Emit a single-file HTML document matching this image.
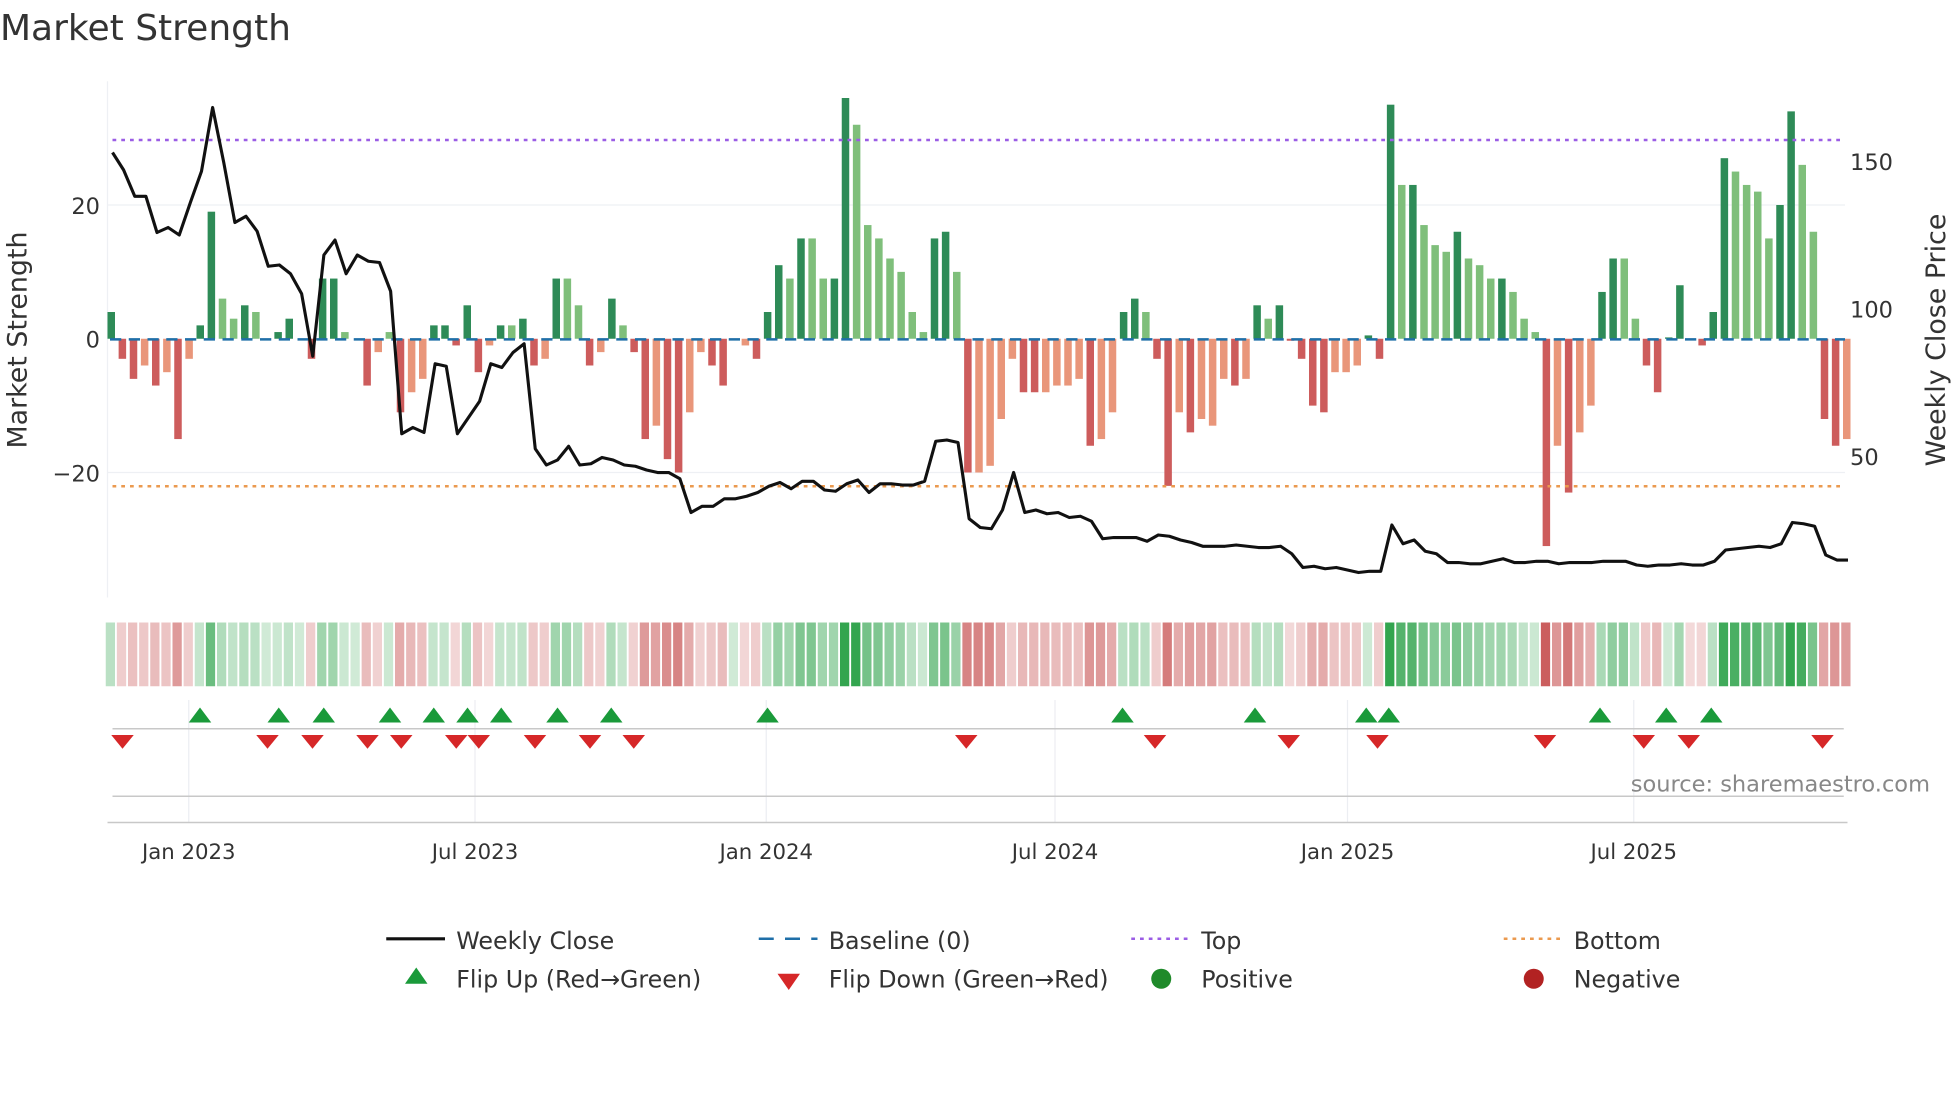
<!DOCTYPE html>
<html><head><meta charset="utf-8"><style>
html,body{margin:0;padding:0;background:#fff;width:1960px;height:1102px;overflow:hidden}
svg{display:block;font-family:"DejaVu Sans","Liberation Sans",sans-serif}
</style></head><body>
<svg id="s" width="1960" height="1102" viewBox="0 0 1568 881.6" xmlns="http://www.w3.org/2000/svg">
<rect width="1568" height="882" fill="#fff"/>
<text x="0" y="32" font-size="28.8" fill="#333">Market Strength</text>
<g stroke="#eef0f4" stroke-width="1">
<line x1="86" y1="164" x2="1476" y2="164"/><line x1="86" y1="378" x2="1476" y2="378"/>
<line x1="86" y1="65" x2="86" y2="478"/>
</g>
<g id="bars"></g>
<line x1="88" y1="271.5" x2="1476" y2="271.5" stroke="#1f6fa8" stroke-width="2" stroke-dasharray="9,6"/>
<line x1="90" y1="112" x2="1476" y2="112" stroke="#9b5de5" stroke-width="2" stroke-dasharray="3,4"/>
<line x1="90" y1="389" x2="1476" y2="389" stroke="#eb9a4f" stroke-width="2" stroke-dasharray="3,4"/>
<polyline id="pl" fill="none" stroke="#111" stroke-width="2.5" stroke-linejoin="round"/>
<g font-size="18" fill="#333">
<text x="80" y="278" text-anchor="end">0</text>
<text x="80" y="171" text-anchor="end">20</text>
<text x="80" y="385" text-anchor="end">−20</text>
<text x="1480" y="136">150</text>
<text x="1480" y="254">100</text>
<text x="1480" y="372">50</text>
<text transform="translate(21,272) rotate(-90)" text-anchor="middle" font-size="21.5">Market Strength</text>
<text transform="translate(1556,272) rotate(-90)" text-anchor="middle" font-size="21.5">Weekly Close Price</text>
</g>
<g id="heat"></g>
<g stroke="#eceef2" stroke-width="1">
<line x1="151" y1="560" x2="151" y2="658"/><line x1="380" y1="560" x2="380" y2="658"/>
<line x1="613" y1="560" x2="613" y2="658"/><line x1="844" y1="560" x2="844" y2="658"/>
<line x1="1078" y1="560" x2="1078" y2="658"/><line x1="1307" y1="560" x2="1307" y2="658"/>
</g>
<line x1="90" y1="583" x2="1475" y2="583" stroke="#c8c8c8" stroke-width="1.2"/>
<line x1="90" y1="637" x2="1475" y2="637" stroke="#c8c8c8" stroke-width="1.2"/>
<line x1="86" y1="658" x2="1478" y2="658" stroke="#c8c8c8" stroke-width="1.2"/>
<g id="tri"></g>
<text x="1544" y="633" font-size="18" fill="#888" text-anchor="end">source: sharemaestro.com</text>
<g font-size="17" fill="#333" text-anchor="middle">
<text x="151" y="687">Jan 2023</text><text x="380" y="687">Jul 2023</text>
<text x="613" y="687">Jan 2024</text><text x="844" y="687">Jul 2024</text>
<text x="1078" y="687">Jan 2025</text><text x="1307" y="687">Jul 2025</text>
</g>
<g font-size="19" fill="#333">
<line x1="309" y1="751" x2="356" y2="751" stroke="#111" stroke-width="2.5"/><text x="365" y="759">Weekly Close</text>
<line x1="607" y1="751" x2="654" y2="751" stroke="#1f6fa8" stroke-width="2" stroke-dasharray="12,9"/><text x="663" y="759">Baseline (0)</text>
<line x1="905" y1="751" x2="952" y2="751" stroke="#9b5de5" stroke-width="2" stroke-dasharray="3,4"/><text x="961" y="759">Top</text>
<line x1="1203" y1="751" x2="1250" y2="751" stroke="#eb9a4f" stroke-width="2" stroke-dasharray="3,4"/><text x="1259" y="759">Bottom</text>
<polygon points="333,774 324,787 342,787" fill="#1a9a3a"/><text x="365" y="790">Flip Up (Red→Green)</text>
<polygon points="622,779 640,779 631,792" fill="#d62728"/><text x="663" y="790">Flip Down (Green→Red)</text>
<circle cx="929" cy="783" r="8" fill="#1f8a2a"/><text x="961" y="790">Positive</text>
<circle cx="1227" cy="783" r="8" fill="#b22222"/><text x="1259" y="790">Negative</text>
</g>
</svg>
<script>
var V=[[4,1],[-3,1],[-6,1],[-4,0],[-7,1],[-5,0],[-15,1],[-3,0],[2,1],[19,1],[6,0],[3,0],[5,1],[4,0],[0,1],[1,1],[3,1],[0,1],[-3,1],[9,1],[9,1],[1,0],[0,1],[-7,1],[-2,0],[1,0],[-11,1],[-8,0],[-6,0],[2,1],[2,1],[-1,1],[5,1],[-5,1],[-1,0],[2,1],[2,0],[3,1],[-4,1],[-3,0],[9,1],[9,0],[5,0],[-4,1],[-2,0],[6,1],[2,0],[-2,1],[-15,1],[-13,0],[-18,1],[-20,1],[-11,0],[-2,0],[-4,1],[-7,1],[0,1],[-1,0],[-3,1],[4,1],[11,1],[9,0],[15,1],[15,0],[9,0],[9,1],[36,1],[32,0],[17,0],[15,0],[12,0],[10,0],[4,0],[1,0],[15,1],[16,1],[10,0],[-20,1],[-20,0],[-19,0],[-12,0],[-3,0],[-8,1],[-8,1],[-8,0],[-7,0],[-7,0],[-6,0],[-16,1],[-15,0],[-11,0],[4,1],[6,1],[4,0],[-3,1],[-22,1],[-11,0],[-14,1],[-12,0],[-13,0],[-6,0],[-7,1],[-6,0],[5,1],[3,0],[5,1],[-0.3,1],[-3,1],[-10,1],[-11,1],[-5,0],[-5,0],[-4,0],[0.5,1],[-3,1],[35,1],[23,0],[23,1],[17,0],[14,0],[13,0],[16,1],[12,0],[11,0],[9,0],[9,1],[7,0],[3,0],[1,0],[-31,1],[-16,0],[-23,1],[-14,0],[-10,0],[7,1],[12,1],[12,0],[3,0],[-4,1],[-8,1],[0.2,1],[8,1],[-0.2,1],[-1,1],[4,1],[27,1],[25,0],[23,0],[22,0],[15,0],[20,1],[34,1],[26,0],[16,0],[-12,1],[-16,1],[-15,0]];
var b="",h="";
V.forEach(function(v,i){var x=89+i*8.9,val=v[0],y=271-val*5.35,c;
 if(val>=0)c=v[1]?"#2e8b57":"#7fbf7b";else c=v[1]?"#cd5c5c":"#e9967a";
 var top=Math.min(y,271),ht=Math.abs(val*5.35);
 b+='<rect x="'+(x-3)+'" y="'+top+'" width="6" height="'+ht+'" fill="'+c+'"/>';
 var a=Math.min(0.95,0.22+Math.abs(val)/40),hc=val>=0?"rgba(40,160,70,"+a+")":"rgba(200,85,85,"+a+")";
 h+='<rect x="'+(x-4.4)+'" y="498" width="7.4" height="51" fill="'+hc+'"/>';});
document.getElementById("bars").innerHTML=b;document.getElementById("heat").innerHTML=h;
var P=[122,136,157,157,186,182,188,162,137,86,130,178,173,185,213,212,219,235,285,204,192,219,204,209,210,233,347,342,346,291,293,347,334,321,291,294,282,275,359,372,368,357,372,371,366,368,372,373,376,378,378,383,410,405,405,399,399,397,394,389,386,391,385,385,392,393,387,384,394,387,387,388,388,385,353,352,354,415,422,423,408,378,410,408,411,410,414,413,417,431,430,430,430,433,428,429,432,434,437,437,437,436,437,438,438,437,443,454,453,455,454,456,458,457,457,420,435,432,441,443,450,450,451,451,449,447,450,450,449,449,451,450,450,450,449,449,449,452,453,452,452,451,452,452,449,440,439,438,437,438,435,418,419,421,444,448,448];
document.getElementById("pl").setAttribute("points",P.map(function(y,i){return (90+i*8.9)+","+y}).join(" "));
var U=[160,223,259,312,347,374,401,446,489,614,898,1004,1093,1111,1280,1333,1369],D=[98,214,250,294,321,365,383,428,472,507,773,924,1031,1102,1236,1315,1351,1458],t="";
U.forEach(function(x){t+='<polygon points="'+x+',566 '+(x-9)+',578 '+(x+9)+',578" fill="#1a9a3a"/>'});
D.forEach(function(x){t+='<polygon points="'+(x-9)+',588 '+(x+9)+',588 '+x+',599" fill="#d62728"/>'});
document.getElementById("tri").innerHTML=t;
</script>
</body></html>
